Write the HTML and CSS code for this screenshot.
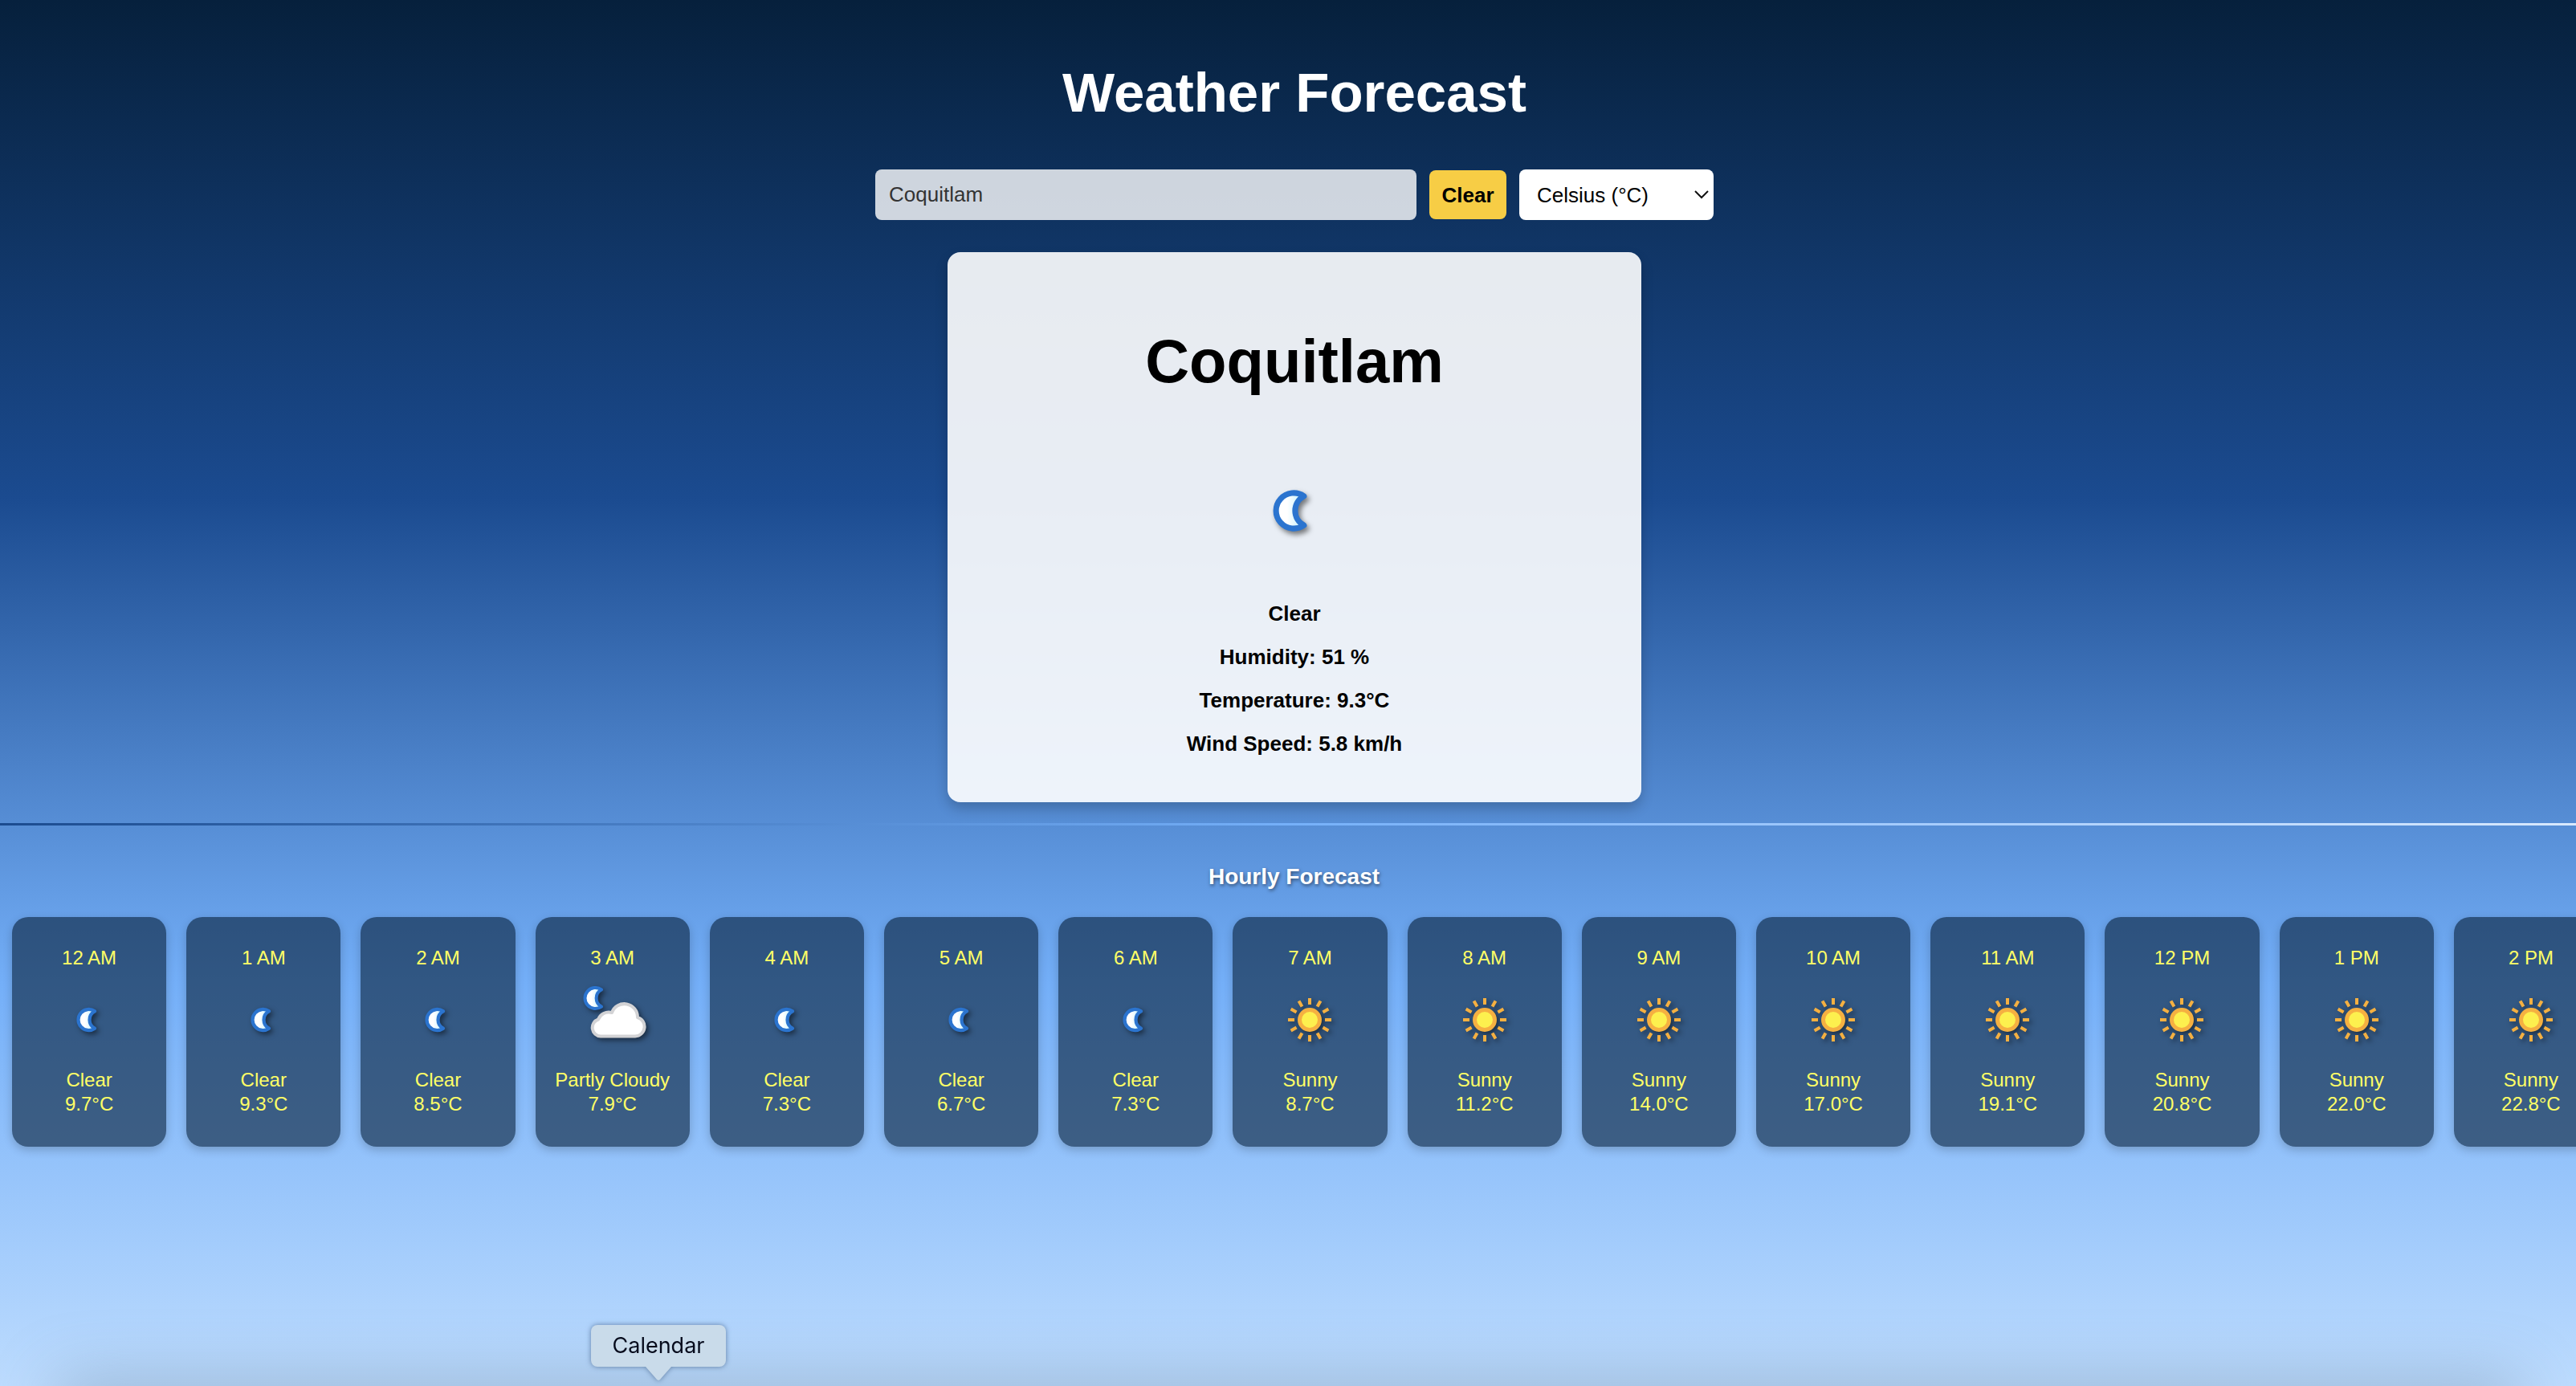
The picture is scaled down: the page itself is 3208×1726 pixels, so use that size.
FILE: index.html
```html
<!DOCTYPE html>
<html lang="en">
<head>
<meta charset="utf-8">
<meta name="viewport" content="width=device-width, initial-scale=1">
<title>Weather Forecast</title>
<link rel="stylesheet" href="styles.css">
</head>
<body>
<svg class="sprite" aria-hidden="true">
  <defs>
    <linearGradient id="moonFill" x1="0" y1="0" x2="1" y2="0">
      <stop offset="0.4" stop-color="#fff"/>
      <stop offset="1" stop-color="#bdeffc"/>
    </linearGradient>
    <symbol id="moon" viewBox="-11 -11 86 86">
      <path d="M39.500 20.500A14 14 0 1 0 39.500 43.500A13 13 0 0 1 39.500 20.500Z" fill="url(#moonFill)" stroke="#2b74cf" stroke-width="4.500" stroke-linejoin="round"/>
    </symbol>
    <symbol id="sun" viewBox="0 0 80 80">
      <g stroke="#f5b041" stroke-width="4">
        <path d="M40 13v8M40 59v8M13 40h8M59 40h8"/>
        <path d="M40 13v8M40 59v8M13 40h8M59 40h8" transform="rotate(30 40 40)"/>
        <path d="M40 13v8M40 59v8M13 40h8M59 40h8" transform="rotate(60 40 40)"/>
      </g>
      <circle cx="40" cy="40" r="12.500" fill="#fdf04e" stroke="#f5b041" stroke-width="5"/>
    </symbol>
    <symbol id="cloud" viewBox="0 0 80 80" overflow="visible">
      <path d="M26 2.400A13 13 0 1 0 26 23.600A12 12 0 0 1 26 2.400Z" fill="url(#moonFill)" stroke="#2b74cf" stroke-width="4" stroke-linejoin="round"/>
      <path d="M25 60.500A10.800 10.800 0 0 1 22 39.500A14 14 0 0 1 39 31A16.500 16.500 0 0 1 71 37A12 12 0 0 1 68 60.500Z" fill="#fff" stroke="#d3d3d5" stroke-width="4" stroke-linejoin="round"/>
    </symbol>
  </defs>
</svg>
<main class="page">
  <header class="top">
    <h1 class="title">Weather Forecast</h1>
    <form class="search">
      <input class="search-input" type="text" value="Coquitlam" aria-label="City">
      <button class="clear-button" type="button">Clear</button>
      <div class="unit">
        <select class="unit-select" aria-label="Temperature unit"><option>Celsius (°C)</option><option>Fahrenheit (°F)</option></select>
        <svg class="chevron" viewBox="0 0 18 18" aria-hidden="true"><path d="M1 5l8 8 8-8" fill="none" stroke="#111" stroke-width="2"/></svg>
      </div>
    </form>
    <section class="current">
      <h2 class="city">Coquitlam</h2>
      <svg class="current-icon" role="img" aria-label="Clear"><use href="#moon"/></svg>
      <p class="fact">Clear</p>
      <p class="fact">Humidity: 51 %</p>
      <p class="fact">Temperature: 9.3°C</p>
      <p class="fact">Wind Speed: 5.8 km/h</p>
    </section>
  </header>
  <hr class="divider">
  <section class="hourly">
    <h3 class="hourly-title">Hourly Forecast</h3>
    <div class="hours">
      <article class="hour"><p>12 AM</p><svg class="icon"><use href="#moon"/></svg><p>Clear<br>9.7°C</p></article>
      <article class="hour"><p>1 AM</p><svg class="icon"><use href="#moon"/></svg><p>Clear<br>9.3°C</p></article>
      <article class="hour"><p>2 AM</p><svg class="icon"><use href="#moon"/></svg><p>Clear<br>8.5°C</p></article>
      <article class="hour"><p>3 AM</p><svg class="icon"><use href="#cloud"/></svg><p>Partly Cloudy<br>7.9°C</p></article>
      <article class="hour"><p>4 AM</p><svg class="icon"><use href="#moon"/></svg><p>Clear<br>7.3°C</p></article>
      <article class="hour"><p>5 AM</p><svg class="icon"><use href="#moon"/></svg><p>Clear<br>6.7°C</p></article>
      <article class="hour"><p>6 AM</p><svg class="icon"><use href="#moon"/></svg><p>Clear<br>7.3°C</p></article>
      <article class="hour"><p>7 AM</p><svg class="icon"><use href="#sun"/></svg><p>Sunny<br>8.7°C</p></article>
      <article class="hour"><p>8 AM</p><svg class="icon"><use href="#sun"/></svg><p>Sunny<br>11.2°C</p></article>
      <article class="hour"><p>9 AM</p><svg class="icon"><use href="#sun"/></svg><p>Sunny<br>14.0°C</p></article>
      <article class="hour"><p>10 AM</p><svg class="icon"><use href="#sun"/></svg><p>Sunny<br>17.0°C</p></article>
      <article class="hour"><p>11 AM</p><svg class="icon"><use href="#sun"/></svg><p>Sunny<br>19.1°C</p></article>
      <article class="hour"><p>12 PM</p><svg class="icon"><use href="#sun"/></svg><p>Sunny<br>20.8°C</p></article>
      <article class="hour"><p>1 PM</p><svg class="icon"><use href="#sun"/></svg><p>Sunny<br>22.0°C</p></article>
      <article class="hour"><p>2 PM</p><svg class="icon"><use href="#sun"/></svg><p>Sunny<br>22.8°C</p></article>
    </div>
  </section>
</main>
<div class="dock-shade"></div>
<div class="tooltip" role="tooltip">Calendar</div>
</body>
</html>
```

FILE: styles.css
```css
* {
  box-sizing: border-box;
}

body {
  margin: 0;
  min-height: 100vh;
  overflow: hidden;
  position: relative;
  background: linear-gradient(#06203c 0%, #1b4b90 36%, #74aff8 71%, #c7e2ff 104%);
  font-family: Arial, "Liberation Sans", sans-serif;
  font-size: 26px;
  line-height: 30px;
  color: #000;
}

.sprite {
  position: absolute;
  width: 0;
  height: 0;
}

.top {
  display: flex;
  flex-direction: column;
  align-items: center;
  padding: 76px 0 26px 16px;
}

.title {
  margin: 0;
  font-size: 69px;
  line-height: 80px;
  color: #fff;
}

.search {
  display: flex;
  align-items: center;
  gap: 16px;
  margin-top: 55px;
}

.search-input,
.clear-button,
.unit-select {
  border: 0;
  border-radius: 8px;
  font: inherit;
  color: #000;
}

.search-input {
  width: 674px;
  height: 63px;
  padding: 0 17px;
  background: rgba(255, 255, 255, 0.8);
  color: #333;
}

.clear-button {
  width: 96px;
  height: 61px;
  padding: 0;
  background: #f7cd45;
  font-weight: bold;
}

.unit {
  position: relative;
}

.unit-select {
  display: block;
  width: 242px;
  height: 63px;
  padding: 0 22px;
  background: #fff;
  appearance: none;
}

.chevron {
  position: absolute;
  top: 22px;
  right: 6px;
  width: 18px;
  height: 18px;
}

.current {
  display: flex;
  flex-direction: column;
  align-items: center;
  width: 864px;
  margin-top: 40px;
  padding: 92px 20px 58px;
  border-radius: 16px;
  background: rgba(255, 255, 255, 0.9);
  box-shadow: 0 8px 16px rgba(0, 0, 0, 0.2);
}

.city {
  margin: 0;
  font-size: 76px;
  line-height: 88px;
}

.current-icon {
  width: 136px;
  height: 136px;
  margin: 74px 0 45px;
  filter: drop-shadow(3px 4px 3px rgba(0, 0, 0, 0.5));
}

.fact {
  margin: 0 0 24px;
  font-weight: bold;
}

.fact:last-child {
  margin-bottom: 0;
}

.divider {
  height: 3px;
  margin: 0;
  border: 0;
  background: linear-gradient(to right, #1b4b8f, #75b0f9 50%, #d8e9ff);
}

.hourly {
  padding-left: 15px;
}

.hourly-title {
  margin: 48px 0 34px;
  font-size: 28px;
  line-height: 32px;
  text-align: center;
  color: #fff;
  text-shadow: 1px 2px 4px rgba(0, 0, 0, 0.5);
}

.hours {
  display: grid;
  grid-template-columns: repeat(15, 1fr);
  gap: 25px;
  margin-right: -40px;
}

.hour {
  display: flex;
  flex-direction: column;
  align-items: center;
  padding: 36px 0 38px;
  border-radius: 20px;
  background: rgba(5, 29, 53, 0.6);
  box-shadow: 0 4px 12px rgba(0, 0, 0, 0.2);
  font-size: 24px;
  text-align: center;
  white-space: nowrap;
  color: #ffff66;
}

.hour p {
  margin: 0;
}

.icon {
  width: 80px;
  height: 80px;
  margin: 22px 0 20px;
  overflow: visible;
  filter: drop-shadow(3px 3px 3px rgba(0, 0, 0, 0.5));
}

.dock-shade {
  position: absolute;
  left: 80px;
  right: 80px;
  bottom: -60px;
  height: 60px;
  box-shadow: 0 0 80px 8px rgba(100, 125, 150, 0.4);
}

.tooltip {
  position: absolute;
  left: 736px;
  bottom: 24px;
  width: 168px;
  height: 52px;
  border-radius: 8px;
  background: #c9dbea;
  filter: drop-shadow(0 0 3px rgba(40, 70, 110, 0.6));
  font-family: Inter, sans-serif;
  font-size: 27px;
  line-height: 52px;
  text-align: center;
  color: #060b1c;
}

.tooltip::after {
  content: "";
  position: absolute;
  top: 100%;
  left: 68px;
  width: 32px;
  height: 17px;
  background: inherit;
  clip-path: polygon(0 0, 100% 0, 56% 94%, 50% 100%, 44% 94%);
}
```
